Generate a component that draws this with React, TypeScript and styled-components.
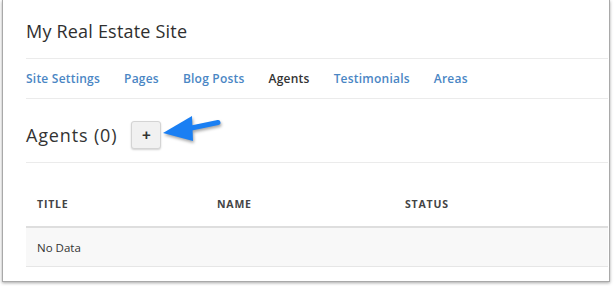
import React from "react";
import styled, { createGlobalStyle } from "styled-components";

const Global = createGlobalStyle`
  html, body { margin: 0; padding: 0; background: #ffffff; }
  body { font-family: "Open Sans", "Liberation Sans", sans-serif; color: #333; }
  * { box-sizing: border-box; }
`;

const Stage = styled.div`
  position: relative;
  width: 614px;
  height: 286px;
  padding: 0 4px 2px 2px;
`;

const Window = styled.div`
  height: 282px;
  background: #fff;
  border: 1px solid #a9a9a9;
  border-top: none;
  box-shadow: 0 1px 3px rgba(0, 0, 0, 0.35);
  padding: 0 1px 0 23px;
  display: flex;
  flex-direction: column;
`;

const TitleBar = styled.div`
  height: 59px;
  display: flex;
  align-items: center;
  padding-top: 3px;
  border-bottom: 1px solid #ebebeb;
`;

const SiteTitle = styled.h1`
  margin: 0;
  font-size: 18px;
  font-weight: 400;
  color: #2f2f2f;
  letter-spacing: 0.2px;
`;

const Nav = styled.nav`
  height: 40px;
  display: flex;
  align-items: center;
  gap: 24px;
  border-bottom: 1px solid #ebebeb;
`;

const NavLink = styled.a<{ $active?: boolean }>`
  font-size: 12px;
  font-weight: 600;
  letter-spacing: 0.22px;
  color: ${(p) => (p.$active ? "#333" : "#4a86c4")};
  text-decoration: none;
`;

const HeadingRow = styled.div`
  height: 64px;
  display: flex;
  align-items: center;
  gap: 14px;
  padding-top: 8px;
  border-bottom: 1px solid #ebebeb;
`;

const Heading = styled.h2`
  margin: 0;
  font-size: 18px;
  font-weight: 400;
  letter-spacing: 0.85px;
  color: #333;
`;

const AddButton = styled.button`
  width: 30px;
  height: 28px;
  border: 1px solid #d4d4d4;
  border-radius: 3px;
  background: #f1f1f1;
  box-shadow: 0 1px 2px rgba(0, 0, 0, 0.18);
  font-family: "Liberation Sans", sans-serif;
  font-size: 15px;
  font-weight: 700;
  color: #333;
  display: flex;
  align-items: center;
  justify-content: center;
  padding: 0 0 1px;
`;

const Table = styled.div`
  display: flex;
  flex-direction: column;
`;

const HeaderRow = styled.div`
  height: 65px;
  display: grid;
  grid-template-columns: 180px 188px 1fr;
  align-items: center;
  padding: 19px 0 0 11px;
  border-bottom: 2px solid #dedede;
`;

const HeaderCell = styled.div`
  font-size: 10.5px;
  font-weight: 700;
  color: #444;
  letter-spacing: 0.8px;
  text-transform: uppercase;
`;

const DataRow = styled.div`
  height: 39px;
  display: flex;
  align-items: center;
  padding-left: 11px;
  background: #f8f8f8;
  border-bottom: 1px solid #e6e6e6;
  font-size: 11.5px;
  color: #333;
`;

const Arrow = styled.svg`
  position: absolute;
  left: 160px;
  top: 112px;
  overflow: visible;
  filter: drop-shadow(1px 2px 1.5px rgba(0, 0, 0, 0.35));
`;

export default function App() {
  const tabs = ["Site Settings", "Pages", "Blog Posts", "Agents", "Testimonials", "Areas"];
  return (
    <>
      <Global />
      <Stage>
        <Window>
          <TitleBar>
            <SiteTitle>My Real Estate Site</SiteTitle>
          </TitleBar>
          <Nav>
            {tabs.map((t) => (
              <NavLink key={t} $active={t === "Agents"}>
                {t}
              </NavLink>
            ))}
          </Nav>
          <HeadingRow>
            <Heading>Agents (0)</Heading>
            <AddButton>+</AddButton>
          </HeadingRow>
          <Table>
            <HeaderRow>
              <HeaderCell>Title</HeaderCell>
              <HeaderCell>Name</HeaderCell>
              <HeaderCell>Status</HeaderCell>
            </HeaderRow>
            <DataRow>No Data</DataRow>
          </Table>
        </Window>
        <Arrow width="64" height="34" viewBox="0 0 64 34">
          <path d="M29 16.5 L58 10.5" stroke="#1a7ff3" strokeWidth="5" strokeLinecap="round" fill="none" />
          <polygon points="3,21 32,4 33,29" fill="#1a7ff3" />
        </Arrow>
      </Stage>
    </>
  );
}
